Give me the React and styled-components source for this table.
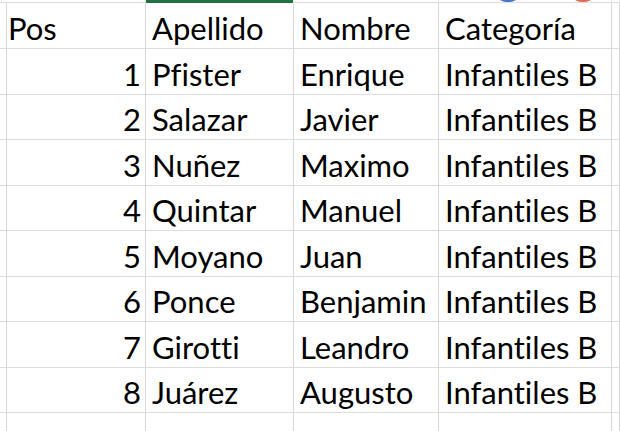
import React from "react";
import styled, { createGlobalStyle } from "styled-components";

const rows = [
  [1, "Pfister", "Enrique", "Infantiles B"],
  [2, "Salazar", "Javier", "Infantiles B"],
  [3, "Nuñez", "Maximo", "Infantiles B"],
  [4, "Quintar", "Manuel", "Infantiles B"],
  [5, "Moyano", "Juan", "Infantiles B"],
  [6, "Ponce", "Benjamin", "Infantiles B"],
  [7, "Girotti", "Leandro", "Infantiles B"],
  [8, "Juárez", "Augusto", "Infantiles B"],
];

const Global = createGlobalStyle`
  body {
    margin: 0;
    background: #ffffff;
    font-family: "Lato", "Open Sans", sans-serif;
    overflow: hidden;
  }
`;

const Sheet = styled.div`
  position: relative;
  width: 620px;
  height: 431px;
  overflow: hidden;
  display: grid;
  grid-template-columns: 2px 144px 148px 145px 173px 8px;
  grid-template-rows: 3px 46px repeat(7, 45.5px) 45.5px 30px;
`;

const Cell = styled.div`
  box-sizing: border-box;
  border-right: 1px solid #d9d9d9;
  border-bottom: 1px solid #dcdcdc;
  font-size: 31px;
  font-variant-ligatures: none;
  color: #000;
  line-height: 1;
  display: flex;
  align-items: flex-end;
  justify-content: ${(p) => (p.$num ? "flex-end" : "flex-start")};
  padding: 0 ${(p) => (p.$num ? "4px" : "0")} 4px ${(p) => (p.$num ? "0" : "6px")};
  white-space: nowrap;
  overflow: visible;
`;

const TopCell = styled.div`
  box-sizing: border-box;
  background: ${(p) => (p.$active ? "#217346" : "transparent")};
  border-bottom: ${(p) => (p.$active ? "none" : "1px solid #dcdcdc")};
  border-right: 1px solid #e6e6e6;
`;

const Dot = styled.span`
  position: absolute;
  top: -9px;
  left: ${(p) => p.$x}px;
  width: 20px;
  height: 11px;
  border-radius: 50%;
  background: ${(p) => p.$color};
`;

export default function App() {
  const cols = [0, 1, 2, 3, 4, 5];
  return (
    <>
      <Global />
      <Sheet>
        {cols.map((c) => (
          <TopCell key={"t" + c} $active={c === 2} />
        ))}
        <Cell />
        <Cell>Pos</Cell>
        <Cell>Apellido</Cell>
        <Cell>Nombre</Cell>
        <Cell>Categoría</Cell>
        <Cell />
        {rows.map((r) => (
          <React.Fragment key={r[0]}>
            <Cell />
            <Cell $num>{r[0]}</Cell>
            <Cell>{r[1]}</Cell>
            <Cell>{r[2]}</Cell>
            <Cell>{r[3]}</Cell>
            <Cell />
          </React.Fragment>
        ))}
        {cols.map((c) => (
          <Cell key={"b" + c} />
        ))}
        <Dot $x={498} $color="#4472c4" />
        <Dot $x={573} $color="#e06b4f" />
      </Sheet>
    </>
  );
}
